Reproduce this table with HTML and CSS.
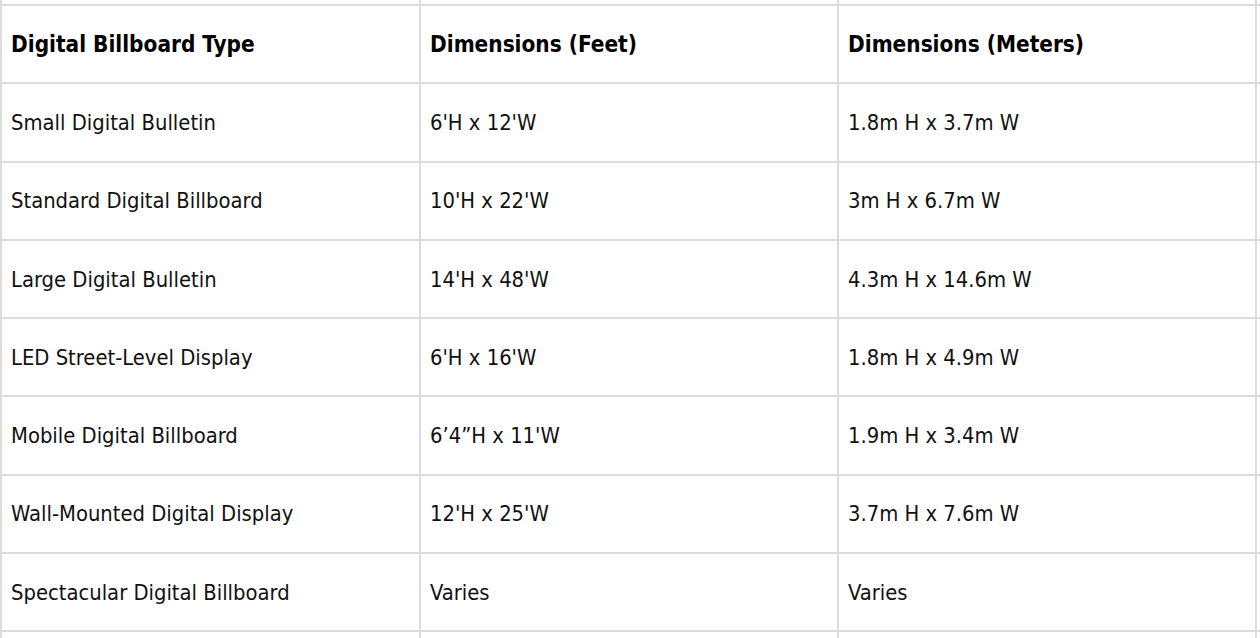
FILE: index.html
```html
<!DOCTYPE html>
<html lang="en">
<head>
<meta charset="utf-8">
<title>Digital Billboard Sizes</title>
<link rel="stylesheet" href="styles.css">
</head>
<body>
<div class="viewport">
  <table class="sizes">
    <colgroup>
      <col class="c1"><col class="c2"><col class="c3"><col class="c4">
    </colgroup>
    <tbody>
      <tr class="spacer"><td></td><td></td><td></td><td></td></tr>
      <tr class="head">
        <th>Digital Billboard Type</th>
        <th>Dimensions (Feet)</th>
        <th>Dimensions (Meters)</th>
        <th></th>
      </tr>
      <tr><td>Small Digital Bulletin</td><td>6'H x 12'W</td><td>1.8m H x 3.7m W</td><td></td></tr>
      <tr><td>Standard Digital Billboard</td><td>10'H x 22'W</td><td>3m H x 6.7m W</td><td></td></tr>
      <tr><td>Large Digital Bulletin</td><td>14'H x 48'W</td><td>4.3m H x 14.6m W</td><td></td></tr>
      <tr><td>LED Street-Level Display</td><td>6'H x 16'W</td><td>1.8m H x 4.9m W</td><td></td></tr>
      <tr><td>Mobile Digital Billboard</td><td>6’4”H x 11'W</td><td>1.9m H x 3.4m W</td><td></td></tr>
      <tr><td>Wall-Mounted Digital Display</td><td>12'H x 25'W</td><td>3.7m H x 7.6m W</td><td></td></tr>
      <tr><td>Spectacular Digital Billboard</td><td>Varies</td><td>Varies</td><td></td></tr>
      <tr><td></td><td></td><td></td><td></td></tr>
    </tbody>
  </table>
</div>
</body>
</html>
```

FILE: styles.css
```css
html, body {
  margin: 0;
  padding: 0;
  background: #ffffff;
}

.viewport {
  width: 1260px;
  height: 638px;
  overflow: hidden;
}

.sizes {
  border-collapse: separate;
  border-spacing: 0;
  border-left: 2px solid #dcdcdc;
  table-layout: fixed;
  width: 1300px;
  font-family: "DejaVu Sans Condensed", "DejaVu Sans", sans-serif;
  font-stretch: condensed;
  font-size: 21.8px;
  color: #111111;
}

.c1 { width: 419px; }
.c2 { width: 418px; }
.c3 { width: 418px; }
.c4 { width: 45px; }

.sizes td,
.sizes th {
  box-sizing: border-box;
  height: 78.3px;
  padding: 0 9px;
  border-right: 2px solid #dcdcdc;
  border-bottom: 2px solid #dcdcdc;
  text-align: left;
  vertical-align: middle;
  white-space: nowrap;
}

.sizes th {
  font-weight: bold;
  font-size: 22.4px;
  color: #000000;
}

.sizes .spacer td {
  height: 6px;
  padding: 0;
}
```
